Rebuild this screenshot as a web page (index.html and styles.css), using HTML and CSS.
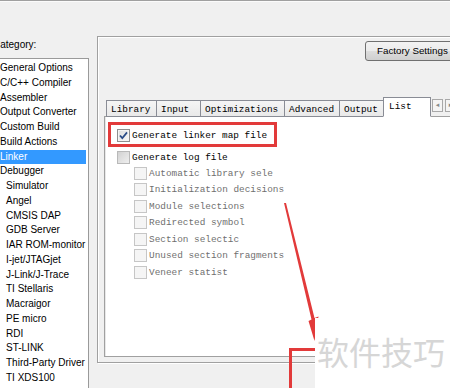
FILE: index.html
```html
<!DOCTYPE html>
<html>
<head>
<meta charset="utf-8">
<link rel="stylesheet" href="styles.css">
</head>
<body>
<div class="topline"></div>
<div class="main">
  <div class="left">
    <div class="cat-label">Category:</div>
    <ul class="cat-list">
      <li>General Options</li>
      <li>C/C++ Compiler</li>
      <li>Assembler</li>
      <li>Output Converter</li>
      <li>Custom Build</li>
      <li>Build Actions</li>
      <li class="sel">Linker</li>
      <li>Debugger</li>
      <li class="sub">Simulator</li>
      <li class="sub">Angel</li>
      <li class="sub">CMSIS DAP</li>
      <li class="sub">GDB Server</li>
      <li class="sub">IAR ROM-monitor</li>
      <li class="sub">I-jet/JTAGjet</li>
      <li class="sub">J-Link/J-Trace</li>
      <li class="sub">TI Stellaris</li>
      <li class="sub">Macraigor</li>
      <li class="sub">PE micro</li>
      <li class="sub">RDI</li>
      <li class="sub">ST-LINK</li>
      <li class="sub">Third-Party Driver</li>
      <li class="sub">TI XDS100</li>
    </ul>
  </div>
  <div class="group">
    <div class="btn-row"><div class="btn">Factory Settings</div></div>
    <div class="tabs">
      <div class="tab w-library">Library</div>
      <div class="tab w-input">Input</div>
      <div class="tab w-opt">Optimizations</div>
      <div class="tab w-adv">Advanced</div>
      <div class="tab w-out">Output</div>
      <div class="tab active w-list">List</div>
      <div class="scroll">
        <span class="sbtn">&#9666;</span>
        <span class="sbtn">&#9656;</span>
      </div>
    </div>
    <div class="page">
      <div class="row first">
        <span class="cb checked"><svg width="11" height="11" viewBox="0 0 11 11"><path d="M2 5.5 L4.3 8.2 L9 2.4" fill="none" stroke="#2a4b86" stroke-width="1.8"/></svg></span>
        <span class="lbl">Generate linker map file</span>
      </div>
      <div class="row second">
        <span class="cb plain"></span>
        <span class="lbl">Generate log file</span>
      </div>
      <div class="row subrow"><span class="cb dis"></span><span class="lbl dim">Automatic library sele</span></div>
      <div class="row subrow"><span class="cb dis"></span><span class="lbl dim">Initialization decisions</span></div>
      <div class="row subrow"><span class="cb dis"></span><span class="lbl dim">Module selections</span></div>
      <div class="row subrow"><span class="cb dis"></span><span class="lbl dim">Redirected symbol</span></div>
      <div class="row subrow"><span class="cb dis"></span><span class="lbl dim">Section selectic</span></div>
      <div class="row subrow"><span class="cb dis"></span><span class="lbl dim">Unused section fragments</span></div>
      <div class="row subrow"><span class="cb dis"></span><span class="lbl dim">Veneer statist</span></div>
    </div>
  </div>
</div>

<div class="mark mark-1"></div>
<div class="mark mark-2"></div>
<svg class="arrow" width="450" height="388" viewBox="0 0 450 388">
  <polygon points="284,203 286,203 314.5,318 318.5,316.5 314.5,341 308.5,321 311.5,319.5" fill="#e23a3a"/>
</svg>
<div class="patch"><span class="wm">软件技巧</span></div>
</body>
</html>
```

FILE: styles.css
```css
html, body {
  margin: 0;
  padding: 0;
}
body {
  width: 450px;
  height: 388px;
  overflow: hidden;
  background: #f0f0f0;
  position: relative;
  font-family: "Liberation Sans", Arial, sans-serif;
  font-size: 10px;
  color: #000;
}
.topline {
  height: 1px;
  background: #a0a0a0;
  border-bottom: 1px solid #fbfbfb;
}
.main {
  display: flex;
  margin-left: -8px;
  align-items: flex-start;
}
.left {
  width: 97px;
  padding-top: 37px;
  flex: none;
}
.cat-label {
  height: 12px;
  line-height: 12px;
  padding-left: 1px;
}
.cat-list {
  list-style: none;
  margin: 7px 0 0 0;
  padding: 2px 0 0 0;
  height: 400px;
  background: #fff;
  border: 1px solid #9a9a9a;
  box-sizing: border-box;
}
.cat-list li {
  height: 14.75px;
  line-height: 14.75px;
  padding-left: 7px;
  margin-right: 2px;
  white-space: nowrap;
}
.cat-list li.sub {
  padding-left: 13px;
}
.cat-list li.sel {
  background: #3399ff;
  color: #fff;
}
.group {
  flex: none;
  margin-left: 8px;
  margin-top: 34px;
  width: 380px;
  height: 327px;
  box-sizing: border-box;
  border: 1px solid #a0a0a0;
  box-shadow: inset 1px 1px 0 #fff, 1px 1px 0 #fff;
  padding: 4px 0 5px 6px;
  display: flex;
  flex-direction: column;
}
.btn-row {
  display: flex;
  padding-left: 261px;
}
.btn {
  height: 20px;
  width: 100px;
  box-sizing: border-box;
  border: 1px solid #707070;
  border-radius: 3px;
  background: linear-gradient(#f3f3f3, #ebebeb 50%, #dddddd 51%, #cfcfcf);
  line-height: 18px;
  padding-left: 11px;
  font-size: 9.8px;
  white-space: nowrap;
}
.tabs {
  display: flex;
  align-items: flex-end;
  margin-top: 36px;
  height: 20px;
  padding-left: 2px;
  margin-bottom: -1px;
  position: relative;
  z-index: 1;
  font-family: "Liberation Mono", "Courier New", monospace;
  font-size: 9.4px;
}
.tab {
  height: 17px;
  line-height: 17px;
  box-sizing: border-box;
  border: 1px solid #898c95;
  margin-right: -1px;
  padding-left: 4px;
  background: linear-gradient(#f5f5f5, #e9e9e9);
  white-space: nowrap;
}
.tab.active {
  height: 20px;
  line-height: 17px;
  background: #fff;
  border-bottom-color: #fff;
  padding-left: 5px;
  position: relative;
  z-index: 2;
}
.w-library { width: 51px; }
.w-input { width: 45px; }
.w-opt { width: 85px; }
.w-adv { width: 56px; }
.w-out { width: 45px; }
.w-list { width: 48px; }
.scroll {
  align-self: flex-start;
  margin-top: 2px;
  margin-left: 2px;
  display: flex;
  gap: 2px;
}
.sbtn {
  width: 11px;
  height: 13px;
  box-sizing: border-box;
  border: 1px solid #a8a8a8;
  background: #f4f4f4;
  color: #8a8a8a;
  font-size: 7px;
  line-height: 11px;
  text-align: center;
  font-family: "DejaVu Sans", sans-serif;
}
.page {
  flex: none;
  height: 241px;
  box-sizing: border-box;
  border: 1px solid #a0a0a0;
  border-right: none;
  background: #fff;
  box-shadow: inset 1px 0 0 #e8e8e8;
  padding-top: 10px;
  font-family: "Liberation Mono", "Courier New", monospace;
  font-size: 9.4px;
}
.row {
  display: flex;
  align-items: center;
  height: 16.5px;
  white-space: nowrap;
}
.row.first {
  height: 16px;
  padding-left: 12px;
}
.row.second {
  height: 16px;
  margin-top: 6px;
  padding-left: 12px;
}
.row.subrow {
  padding-left: 29px;
}
.cb {
  width: 13px;
  height: 13px;
  box-sizing: border-box;
  flex: none;
  margin-right: 2px;
  display: flex;
  align-items: center;
  justify-content: center;
}
.cb.checked {
  border: 1px solid #8e8f8f;
  background: linear-gradient(135deg, #dcdcdc, #f8f8f8);
  box-shadow: inset 0 0 0 1px #f4f4f4;
}
.cb.plain {
  border: 1px solid #b9b9b9;
  background: linear-gradient(135deg, #d2d2d2, #efefef);
}
.cb.dis {
  border: 1px solid #c6c6c6;
  background: #f5f5f5;
}
.lbl {
  color: #000;
}
.lbl.dim {
  color: #6f6f6f;
}
.mark {
  position: absolute;
  border: 3px solid #e23a3a;
  box-sizing: border-box;
}
.mark-1 {
  left: 108px;
  top: 122px;
  width: 169px;
  height: 25px;
}
.mark-2 {
  left: 289px;
  top: 348px;
  width: 120px;
  height: 60px;
}
.arrow {
  position: absolute;
  left: 0;
  top: 0;
}
.patch {
  position: absolute;
  left: 315px;
  top: 318px;
  right: 0;
  bottom: 0;
  background: #fff;
  padding: 17px 0 0 2px;
}
.wm {
  font-family: "Noto Sans CJK SC", sans-serif;
  font-size: 32px;
  line-height: 32px;
  color: #d6d6d6;
  white-space: nowrap;
  display: block;
}
```
